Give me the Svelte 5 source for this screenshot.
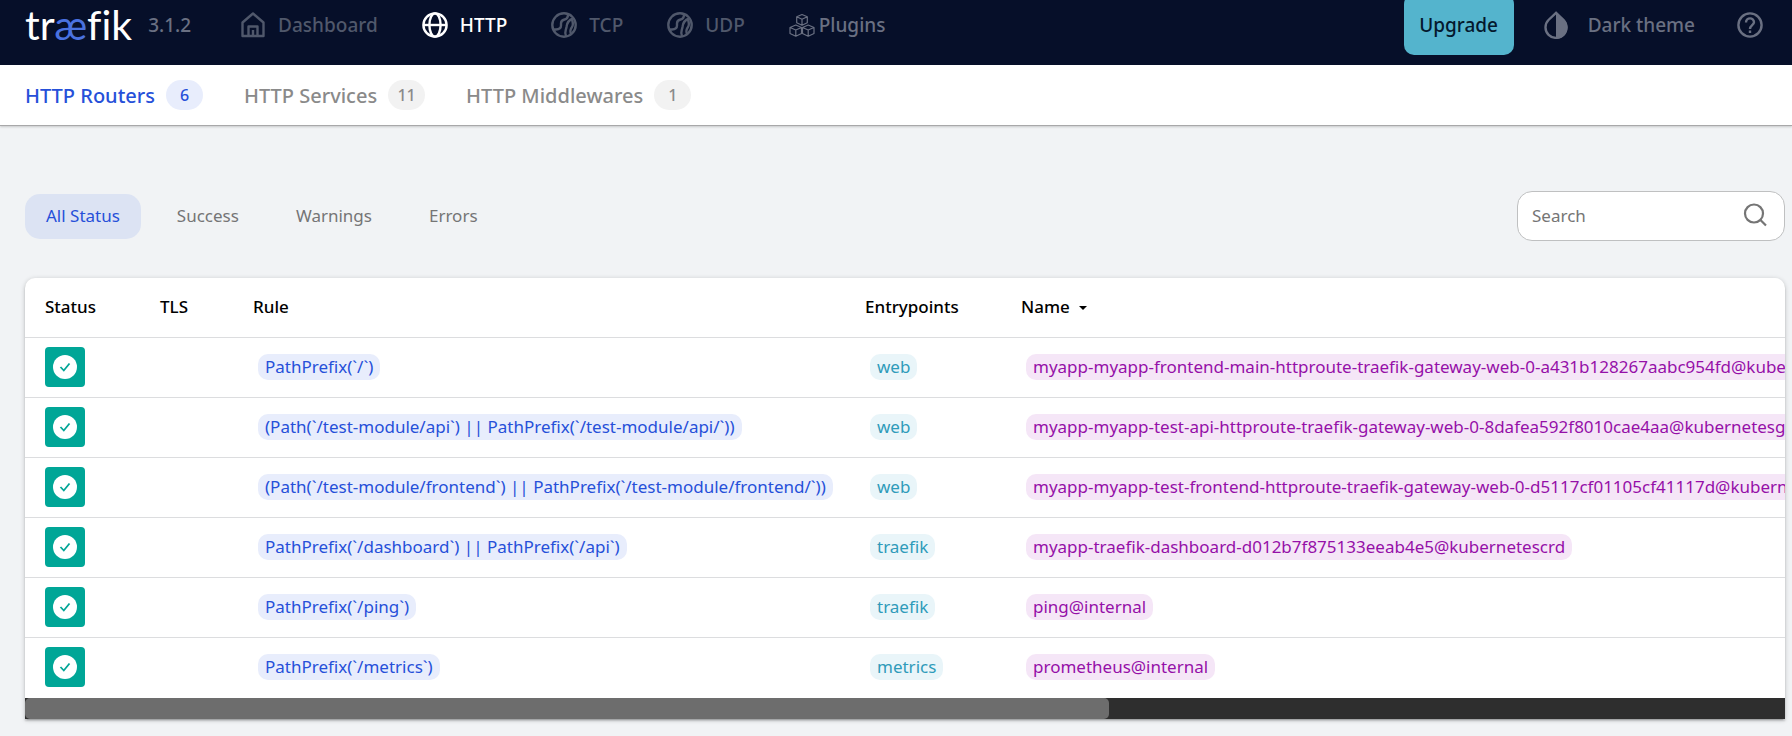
<script>
    let current = $state('HTTP')
    let tab = $state('HTTP Routers')
    let filter = $state('All Status')
    let search = $state('')
    let scrollLeft = $state(0)

    // visible part of the table, in percent of its full width
    const thumb = 61.6

    const tabs = [
        { name: 'HTTP Routers', count: 6 },
        { name: 'HTTP Services', count: 11 },
        { name: 'HTTP Middlewares', count: 1 }
    ]

    const filters = ['All Status', 'Success', 'Warnings', 'Errors']

    const routers = [
        { rule: 'PathPrefix(`/`)', entry: 'web', name: 'myapp-myapp-frontend-main-httproute-traefik-gateway-web-0-a431b128267aabc954fd@kubernetesgateway' },
        { rule: '(Path(`/test-module/api`) || PathPrefix(`/test-module/api/`))', entry: 'web', name: 'myapp-myapp-test-api-httproute-traefik-gateway-web-0-8dafea592f8010cae4aa@kubernetesgateway' },
        { rule: '(Path(`/test-module/frontend`) || PathPrefix(`/test-module/frontend/`))', entry: 'web', name: 'myapp-myapp-test-frontend-httproute-traefik-gateway-web-0-d5117cf01105cf41117d@kubernetesgateway' },
        { rule: 'PathPrefix(`/dashboard`) || PathPrefix(`/api`)', entry: 'traefik', name: 'myapp-traefik-dashboard-d012b7f875133eeab4e5@kubernetescrd' },
        { rule: 'PathPrefix(`/ping`)', entry: 'traefik', name: 'ping@internal' },
        { rule: 'PathPrefix(`/metrics`)', entry: 'metrics', name: 'prometheus@internal' }
    ]

    let rows = $derived(routers.filter((r) => (r.rule + r.entry + r.name).includes(search)))

    const onscroll = (e) => {
        scrollLeft = (e.currentTarget.scrollLeft / e.currentTarget.scrollWidth) * 100
    }
</script>

{#snippet ball()}
    <svg class="icon" viewBox="0 0 26 26" fill="none" stroke="currentColor" stroke-width="2.4">
        <circle cx="13" cy="13" r="11.7" />
        <path d="M2 17.500H5C8.500 17.500 10 16 10 13.500V11.500C10 9 11.500 8 13.500 7.500C16 7 17 5.500 17 2.500" />
        <path d="M15 24C13 20.500 15 18.500 15.500 15C16 10.500 17.500 8 22 6.500" />
        <path d="M20 22C18.500 19 19.500 17 21 15C22.500 13 22 10.500 21 7.500" />
    </svg>
{/snippet}

<header>
    <div class="toolbar">
        <a class="logo" href="#home">tr<span>æ</span>fik</a>
        <span class="version">3.1.2</span>
        <nav>
            <a href="#dashboard" class:active={current === 'Dashboard'} onclick={() => (current = 'Dashboard')}>
                <svg class="icon" viewBox="0 0 26 26" fill="none" stroke="currentColor" stroke-width="2.4" stroke-linejoin="round">
                    <path d="M2.500 10.500L13 1.500L23.500 10.500V24H2.500Z" />
                    <path d="M8.500 24V14.500H17.500V24M13 18V24" />
                </svg>
                Dashboard
            </a>
            <a href="#http" class:active={current === 'HTTP'} onclick={() => (current = 'HTTP')}>
                <svg class="icon" viewBox="0 0 26 26" fill="none" stroke="currentColor" stroke-width="2.4">
                    <circle cx="13" cy="13" r="11.6" />
                    <ellipse cx="13" cy="13" rx="5.600" ry="11.600" />
                    <path d="M1.500 13H24.500" />
                </svg>
                HTTP
            </a>
            <a href="#tcp" class:active={current === 'TCP'} onclick={() => (current = 'TCP')}>
                {@render ball()}
                TCP
            </a>
            <a href="#udp" class:active={current === 'UDP'} onclick={() => (current = 'UDP')}>
                {@render ball()}
                UDP
            </a>
            <a href="#plugins" class="plugins">
                <svg class="icon" viewBox="0 0 26 26" fill="none" stroke="currentColor" stroke-width="1.2" stroke-linejoin="round">
                    <path d="M13 2.500L18.300 4.800V10.700L13 13.300L7.700 10.700V4.800ZM7.700 4.800L13 7.300L18.300 4.800M13 7.300V13.300" />
                    <path d="M6.800 13L12.500 15.500V21.500L6.800 24.200L1 21.500V15.500ZM1 15.500L6.800 18L12.500 15.500M6.800 18V24.200" />
                    <path d="M19.200 13L25 15.500V21.500L19.200 24.200L13.500 21.500V15.500ZM13.500 15.500L19.200 18L25 15.500M19.200 18V24.200" />
                </svg>
                Plugins
            </a>
        </nav>
        <div class="actions">
            <button class="upgrade">Upgrade</button>
            <button class="theme">
                <svg class="drop" viewBox="0 0 24 28">
                    <path d="M12 1.800L19.500 9A10.500 10.500 0 1 1 4.500 9Z" fill="none" stroke="currentColor" stroke-width="2.4" />
                    <path d="M12 0.500L20.300 8.500A11.600 11.600 0 0 1 12 28Z" fill="currentColor" />
                </svg>
                Dark theme
            </button>
            <button class="help" aria-label="Help">
                <svg class="icon" viewBox="0 0 26 26" fill="none" stroke="currentColor" stroke-width="2.4">
                    <circle cx="13" cy="13" r="11.6" />
                    <path d="M9 10.500C9 5 17 5 17 10.300C17 13 13 13.500 13 17" />
                    <path d="M13 18.500V21" />
                </svg>
            </button>
        </div>
    </div>
</header>

<div class="tabs">
    {#each tabs as t}
        <a href="#{t.name}" class:active={tab === t.name} onclick={() => (tab = t.name)}>
            {t.name}<span class="count">{t.count}</span>
        </a>
    {/each}
</div>

<main>
    <div class="tools">
        <div class="filters">
            {#each filters as f}
                <button class:active={filter === f} onclick={() => (filter = f)}>{f}</button>
            {/each}
        </div>
        <label class="search">
            <input type="text" placeholder="Search" aria-label="Search" bind:value={search} />
            <svg viewBox="0 0 24 24" fill="none" stroke="currentColor" stroke-width="2.2">
                <circle cx="11" cy="10.500" r="9" />
                <path d="M17.500 17L23 22.500" />
            </svg>
        </label>
    </div>

    <div class="card">
        <div class="scroller" {onscroll}>
            <table>
                <colgroup>
                    <col class="c-status" />
                    <col class="c-tls" />
                    <col class="c-rule" />
                    <col class="c-entry" />
                    <col />
                </colgroup>
                <thead>
                    <tr>
                        <th>Status</th>
                        <th>TLS</th>
                        <th>Rule</th>
                        <th>Entrypoints</th>
                        <th>
                            Name
                            <svg class="caret" viewBox="0 0 8 4"><path d="M0 0H8L4 4Z" /></svg>
                        </th>
                    </tr>
                </thead>
                <tbody>
                    {#each rows as r}
                        <tr>
                            <td>
                                <div class="status">
                                    <svg viewBox="0 0 24 24">
                                        <circle cx="12" cy="12" r="12" fill="#fff" />
                                        <path d="M7.500 12L10.800 15.500L16.500 8.500" fill="none" stroke="#00a697" stroke-width="1.8" />
                                    </svg>
                                </div>
                            </td>
                            <td></td>
                            <td><span class="chip rule">{r.rule}</span></td>
                            <td><span class="chip entry">{r.entry}</span></td>
                            <td><span class="chip name">{r.name}</span></td>
                        </tr>
                    {/each}
                </tbody>
            </table>
        </div>
        <div class="track">
            <div class="thumb" style="width: {thumb}%; margin-left: {scrollLeft}%"></div>
        </div>
    </div>
</main>

<style>
    :global(body) {
        background-color: #f1f3f5;
        font-family: "Noto Sans", sans-serif;
        font-size: 17px;
        color: #000;
    }

    a {
        text-decoration: none;
        color: inherit;
    }

    button {
        border: none;
        background: none;
        padding: 0;
        font: inherit;
        color: inherit;
        cursor: pointer;
    }

    /* the bar sits partly above the top edge of the page */
    header {
        height: 65px;
        overflow: hidden;
        background-color: #060f29;
        color: #6a7082;
        font-size: 19px;
        font-weight: 500;
        display: flex;
        align-items: end;
    }

    .toolbar {
        flex: 1;
        height: 81px;
        padding: 0 29px 0 25px;
        display: flex;
        align-items: center;
    }

    .logo {
        font-family: Lato, sans-serif;
        font-size: 41px;
        font-weight: 400;
        font-variant-ligatures: none;
        line-height: 48px;
        color: #fff;
    }

    .logo span {
        color: #4a72e0;
    }

    .version {
        margin-left: 16px;
    }

    nav {
        display: flex;
        margin-left: 49px;
        gap: 44px;
    }

    nav a {
        display: flex;
        align-items: center;
        gap: 12px;
        color: #50586b;
    }

    nav a.active {
        color: #fff;
    }

    nav a.plugins {
        gap: 4px;
        color: #6a7082;
    }

    .icon {
        width: 26px;
        height: 26px;
        display: block;
    }

    .actions {
        margin-left: auto;
        display: flex;
        align-items: center;
        gap: 30px;
    }

    .upgrade {
        width: 110px;
        height: 61px;
        border-radius: 10px;
        background-color: #54b4cd;
        color: #04192e;
    }

    .theme {
        display: flex;
        align-items: center;
        gap: 20px;
        margin-right: 12px;
    }

    .drop {
        width: 24px;
        height: 28px;
    }

    .tabs {
        height: 60px;
        padding: 0 25px;
        display: flex;
        align-items: center;
        gap: 41px;
        background-color: #fff;
        box-shadow: 0 1px 0 #a8a8a9, 0 2px 2px #c8c9ca;
        font-size: 20px;
        font-weight: 500;
        color: #8a8a8a;
    }

    .tabs a {
        display: flex;
        align-items: center;
        gap: 11px;
    }

    .count {
        width: 37px;
        line-height: 30px;
        border-radius: 15px;
        background-color: #f2f2f2;
        font-size: 16px;
        text-align: center;
    }

    .tabs a.active {
        color: #2650d9;
    }

    .active .count {
        background-color: #e8edfc;
    }

    main {
        padding: 66px 7px 17px 25px;
    }

    .tools {
        display: flex;
        justify-content: space-between;
        align-items: center;
        margin-bottom: 37px;
    }

    .filters {
        display: flex;
        gap: 15px;
        color: #757575;
    }

    .filters button {
        height: 45px;
        padding: 0 21px 2px;
        border-radius: 15px;
    }

    .filters button.active {
        background-color: #dce3f3;
        color: #2650d9;
    }

    .search {
        box-sizing: border-box;
        width: 268px;
        height: 50px;
        padding: 0 17px 2px 14px;
        display: flex;
        align-items: center;
        border: 1px solid #bfc0c1;
        border-radius: 15px;
        background-color: #fff;
    }

    .search input {
        flex: 1;
        min-width: 0;
        border: none;
        outline: none;
        padding: 0;
        background: none;
        font: inherit;
    }

    .search input::placeholder {
        color: #757575;
    }

    .search svg {
        width: 24px;
        height: 24px;
        color: #757575;
    }

    .card {
        border-radius: 10px 10px 0 0;
        background-color: #fff;
        box-shadow: 0 1px 5px rgba(0, 0, 0, 0.2), 0 2px 2px rgba(0, 0, 0, 0.14), 0 3px 1px -2px rgba(0, 0, 0, 0.12);
    }

    .scroller {
        overflow-x: auto;
        scrollbar-width: none;
    }

    table {
        width: 162%;
        table-layout: fixed;
        border-collapse: separate;
        border-spacing: 0;
        white-space: nowrap;
    }

    .c-status {
        width: 115px;
    }

    .c-tls {
        width: 93px;
    }

    .c-rule {
        width: 612px;
    }

    .c-entry {
        width: 156px;
    }

    th,
    td {
        box-sizing: border-box;
        height: 60px;
        padding: 0 0 2px 20px;
        text-align: left;
        border-bottom: 1px solid #dcdddf;
    }

    tr:last-child td {
        border-bottom: none;
    }

    th {
        border-bottom: 1px solid #dcdddf;
        font-weight: 500;
    }

    .caret {
        width: 8px;
        height: 4px;
        margin-left: 5px;
        vertical-align: middle;
    }

    .status {
        width: 40px;
        height: 40px;
        border-radius: 4px;
        background-color: #00a697;
        display: flex;
        align-items: center;
        justify-content: center;
    }

    .status svg {
        width: 24px;
        height: 24px;
    }

    .chip {
        display: inline-block;
        margin-left: 5px;
        padding: 0 7px;
        line-height: 26px;
        border-radius: 10px;
    }

    .rule {
        background-color: #e8edfc;
        color: #2650d9;
    }

    .entry {
        background-color: #e9f5f9;
        color: #2f9bba;
    }

    .name {
        background-color: #f5e6f7;
        color: #9510a8;
    }

    .track {
        height: 21px;
        background-color: #2e2e2e;
    }

    .thumb {
        height: 21px;
        border-radius: 5px;
        background-color: #6d6d6d;
    }
</style>
